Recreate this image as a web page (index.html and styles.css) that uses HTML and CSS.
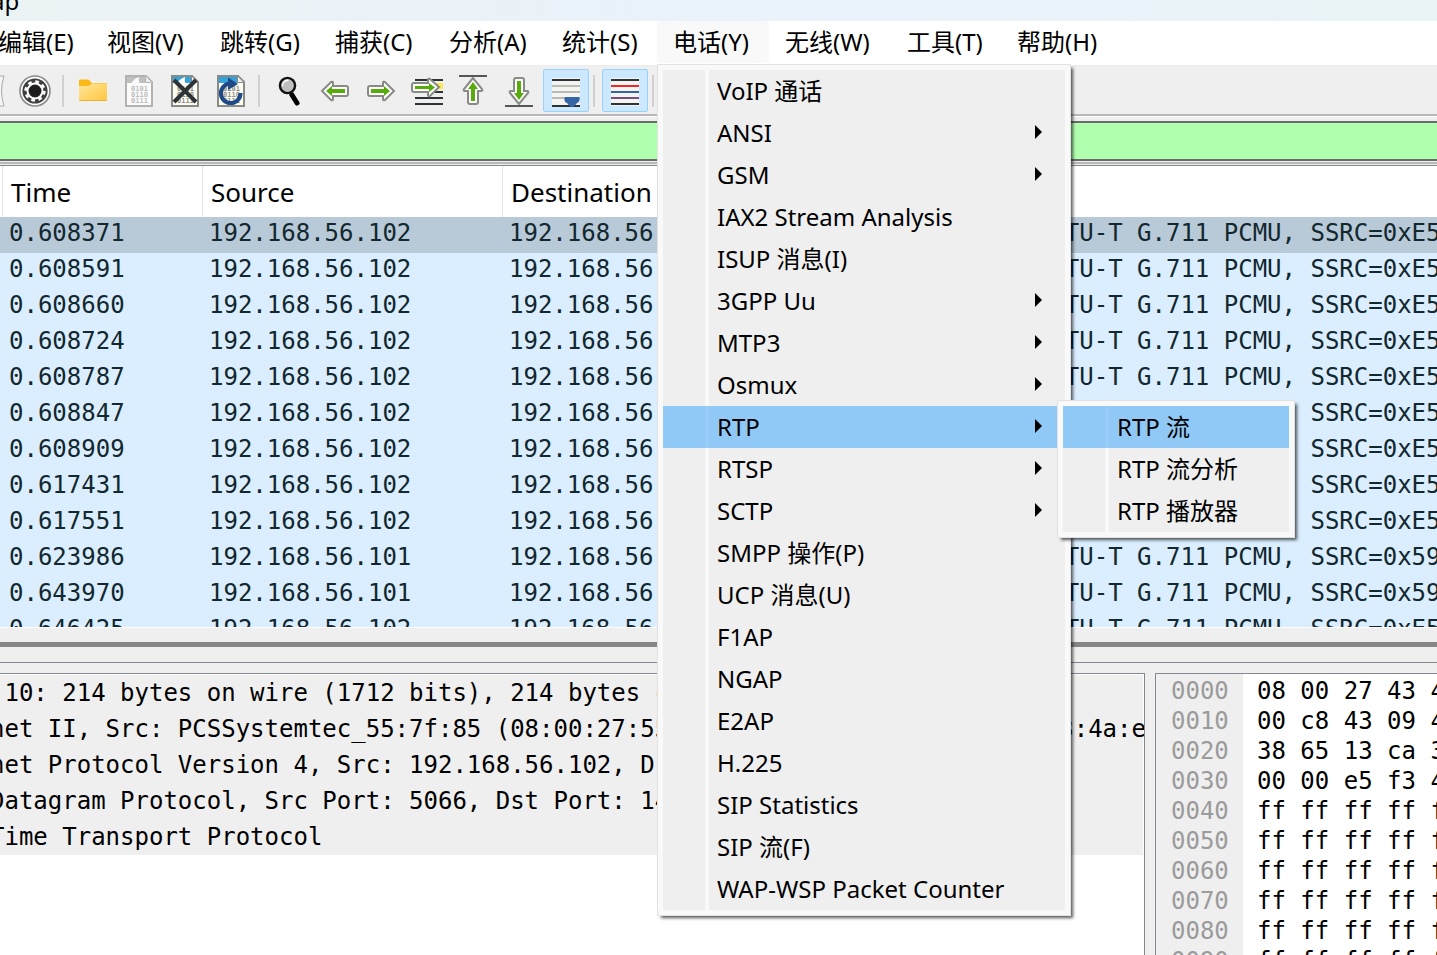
FILE: index.html
```html
<!DOCTYPE html>
<html lang="zh-CN">
<head>
    <meta charset="UTF-8">
    <meta name="viewport" content="width=device-width, initial-scale=1.0">
    <title>Packet Capture</title>
    <link rel="stylesheet" href="styles.css">
</head>
<body>
    <header class="title-bar">ap</header>

    <nav class="menu-bar">
        <button class="menu-title">编辑(E)</button>
        <button class="menu-title">视图(V)</button>
        <button class="menu-title">跳转(G)</button>
        <button class="menu-title">捕获(C)</button>
        <button class="menu-title">分析(A)</button>
        <button class="menu-title">统计(S)</button>
        <div class="menu-holder">
            <button class="menu-title open">电话(Y)</button>
            <!-- Telephony menu -->
            <div class="menu main-menu">
                <button class="menu-item">VoIP 通话</button>
                <button class="menu-item has-sub">ANSI</button>
                <button class="menu-item has-sub">GSM</button>
                <button class="menu-item">IAX2 Stream Analysis</button>
                <button class="menu-item">ISUP 消息(I)</button>
                <button class="menu-item has-sub">3GPP Uu</button>
                <button class="menu-item has-sub">MTP3</button>
                <button class="menu-item has-sub">Osmux</button>
                <div class="menu-holder">
                    <button class="menu-item has-sub active">RTP</button>
                    <div class="menu sub-menu">
                        <button class="menu-item active">RTP 流</button>
                        <button class="menu-item">RTP 流分析</button>
                        <button class="menu-item">RTP 播放器</button>
                    </div>
                </div>
                <button class="menu-item has-sub">RTSP</button>
                <button class="menu-item has-sub">SCTP</button>
                <button class="menu-item">SMPP 操作(P)</button>
                <button class="menu-item">UCP 消息(U)</button>
                <button class="menu-item">F1AP</button>
                <button class="menu-item">NGAP</button>
                <button class="menu-item">E2AP</button>
                <button class="menu-item">H.225</button>
                <button class="menu-item">SIP Statistics</button>
                <button class="menu-item">SIP 流(F)</button>
                <button class="menu-item">WAP-WSP Packet Counter</button>
            </div>
        </div>
        <button class="menu-title">无线(W)</button>
        <button class="menu-title">工具(T)</button>
        <button class="menu-title">帮助(H)</button>
    </nav>

    <div class="toolbar">
        <button class="tool" aria-label="Restart capture">
            <svg width="32" height="32" viewBox="0 0 32 32"><path d="M2 1h29q-5 15 0 30H2z" fill="#f6f6f6" stroke="#aaa"/></svg>
        </button>
        <button class="tool" aria-label="Capture options">
            <svg width="32" height="32" viewBox="0 0 32 32">
                <circle cx="16" cy="16" r="15" fill="#fff" stroke="#8a8a8a" stroke-width="1.6"/>
                <circle cx="16" cy="16" r="12.6" fill="#3f4042"/>
                <circle cx="16" cy="16" r="7.5" fill="#222" stroke="#fff" stroke-width="2"/>
                <circle cx="16" cy="16" r="9.4" fill="none" stroke="#fff" stroke-width="2.6" stroke-dasharray="3.7 3.68"/>
                <circle cx="16" cy="16" r="5" fill="#1c1c1c"/>
            </svg>
        </button>
        <span class="separator"></span>
        <button class="tool" aria-label="Open">
            <svg width="28" height="32" viewBox="0 0 28 32">
                <defs><linearGradient id="folder" x1="0" y1="0" x2="1" y2="1"><stop offset="0" stop-color="#ffe69a"/><stop offset="1" stop-color="#ffc63f"/></linearGradient></defs>
                <path d="M0 5.500q0-1 1-1h8.500l3.500 3.500h14q1 0 1 1v6H0z" fill="#fbb917"/>
                <path d="M0 11h9.500l3.500-2.500h14q1 0 1 1V25q0 1-1 1H1q-1 0-1-1z" fill="url(#folder)"/>
                <path d="M.5 25.500h27" stroke="#edaf31"/>
            </svg>
        </button>
        <button class="tool" aria-label="Save">
            <svg width="28" height="32" viewBox="0 0 28 32">
                <path d="M1 1h20l6 6v24H1z" fill="#fbfbfb" stroke="#b2b2b2" stroke-width="2"/>
                <path d="M2 2h18v6H2z" fill="#c0c0c0"/>
                <path d="M6 9q2-5 8-7q-1 4 1 7zM20 1v7h7z" fill="#fafafa"/>
                <path d="M20.500 1.500v6h6" fill="#eee" stroke="#b2b2b2"/>
                <g class="bits pale"><text x="6" y="16">0101</text><text x="6" y="22">0110</text><text x="6" y="28">0111</text></g>
            </svg>
        </button>
        <button class="tool" aria-label="Close file">
            <svg width="28" height="32" viewBox="0 0 28 32">
                <path d="M1 1h20l6 6v24H1z" fill="#fdfdf0" stroke="#888a85" stroke-width="2"/>
                <path d="M2 2h18v6H2z" fill="#33a3dc"/>
                <path d="M6 9q2-5 8-7q-1 4 1 7z" fill="#fff"/>
                <path d="M20.500 1.500v6h6" fill="#eee" stroke="#888a85"/>
                <g class="bits"><text x="6" y="16">0101</text><text x="6" y="22">0110</text><text x="6" y="28">0111</text></g>
                <path d="M3 5l22 22M25 5L3 27" stroke="#2e3436" stroke-width="4"/>
            </svg>
        </button>
        <button class="tool" aria-label="Reload file">
            <svg width="28" height="32" viewBox="0 0 28 32">
                <path d="M1 1h20l6 6v24H1z" fill="#fdfdf0" stroke="#888a85" stroke-width="2"/>
                <path d="M2 2h18v6H2z" fill="#33a3dc"/>
                <path d="M20.500 1.500v6h6" fill="#eee" stroke="#888a85"/>
                <g class="bits"><text x="6" y="16">0101</text><text x="6" y="22">0110</text><text x="6" y="28">0111</text></g>
                <path d="M23.500 18A9.800 9.800 0 1 1 14 8.500" fill="none" stroke="#204a87" stroke-width="4"/>
                <path d="M11 2.500L21 9l-10 6z" fill="#204a87"/>
            </svg>
        </button>
        <span class="separator"></span>
        <button class="tool" aria-label="Find packet">
            <svg width="28" height="32" viewBox="0 0 28 32">
                <path d="M17 20l5 8" stroke="#000" stroke-width="5" stroke-linecap="round"/>
                <path d="M13 15l4 5" stroke="#000" stroke-width="3"/>
                <circle cx="12.500" cy="10.500" r="7.600" fill="#bfbfbf" stroke="#111" stroke-width="2.400"/>
                <path d="M7.500 11a5 5 0 0 1 6-5.500" fill="none" stroke="#fff" stroke-width="1.500"/>
            </svg>
        </button>
        <button class="tool" aria-label="Previous packet">
            <svg class="arrow" width="30" height="32" viewBox="0 0 30 32"><path class="rim" d="M2 16l9-9q2-1 2 1v3h13q2 0 2 2v6q0 2-2 2H13v3q0 2-2 1z"/><path class="fill" d="M6 16l6-5v3h13v4H12v3z"/></svg>
        </button>
        <button class="tool" aria-label="Next packet">
            <svg class="arrow" width="30" height="32" viewBox="0 0 30 32"><path class="rim" d="M28 16l-9-9q-2-1-2 1v3H4q-2 0-2 2v6q0 2 2 2h13v3q0 2 2 1z"/><path class="fill" d="M24 16l-6-5v3H5v4h13v3z"/></svg>
        </button>
        <button class="tool" aria-label="Go to packet">
            <svg class="arrow" width="32" height="32" viewBox="0 0 32 32">
                <path d="M18 8h14v6H18z" fill="#fce94f"/>
                <path d="M4 5h28M4 17h28M4 23h28M4 29h28" stroke="#2e3436" stroke-width="2"/>
                <path class="rim" d="M28 12l-9-8q-2-1-2 1v3H3q-2 0-2 2v5q0 2 2 2h14v3q0 2 2 1z"/><path class="fill" d="M24 12.500L18 8v3H4v3h14v3z"/>
            </svg>
        </button>
        <button class="tool" aria-label="First packet">
            <svg class="arrow" width="28" height="32" viewBox="0 0 28 32"><path d="M0 1h28" stroke="#555753" stroke-width="2"/><path class="rim" d="M14 3l-9 11q-1 2 1 2h3v11q0 2 2 2h6q2 0 2-2V16h3q2 0 1-2z"/><path class="fill" d="M14 7l-5 7h3v12h4V14h3z"/></svg>
        </button>
        <button class="tool" aria-label="Last packet">
            <svg class="arrow" width="28" height="32" viewBox="0 0 28 32"><path d="M0 31h28" stroke="#555753" stroke-width="2"/><path class="rim" d="M14 29L5 18q-1-2 1-2h3V5q0-2 2-2h6q2 0 2 2v11h3q2 0 1 2z"/><path class="fill" d="M14 25l-5-7h3V6h4v12h3z"/></svg>
        </button>
        <button class="tool checked" aria-label="Auto scroll">
            <svg width="28" height="32" viewBox="0 0 28 32">
                <path d="M0 3h28v28H0z" fill="#f4f4f2"/>
                <path d="M0 5h28M0 31h28" stroke="#2e3436" stroke-width="2"/>
                <path d="M0 11h28M0 17h28M0 23h28" stroke="#babdb6" stroke-width="2"/>
                <path d="M13 22h14q2 4-2 6q-3 4-5 4t-5-4q-4-2-2-6z" fill="#3465a4"/>
            </svg>
        </button>
        <span class="separator"></span>
        <button class="tool checked" aria-label="Colorize">
            <svg width="28" height="32" viewBox="0 0 28 32">
                <path d="M0 3h28v28H0z" fill="#f4f4f2"/>
                <path d="M0 5h28M0 29h28" stroke="#2e3436" stroke-width="2"/>
                <path d="M0 11h28" stroke="#ef2929" stroke-width="2"/>
                <path d="M0 17h28" stroke="#3465a4" stroke-width="2"/>
                <path d="M0 23h28" stroke="#75507b" stroke-width="2"/>
            </svg>
        </button>
        <span class="separator"></span>
    </div>

    <div class="filter-bar">
        <input class="filter-input" type="text" aria-label="Display filter">
    </div>

    <section class="packet-list">
        <table class="packets">
            <colgroup>
                <col class="col-no"><col class="col-time"><col class="col-address"><col class="col-address"><col class="col-small"><col class="col-small"><col>
            </colgroup>
            <thead>
                <tr><th></th><th>Time</th><th>Source</th><th>Destination</th><th></th><th></th><th></th></tr>
            </thead>
            <tbody>
                <tr class="selected"><td></td><td>0.608371</td><td>192.168.56.102</td><td>192.168.56.101</td><td></td><td></td><td>PT=ITU-T G.711 PCMU, SSRC=0xE5</td></tr>
                <tr><td></td><td>0.608591</td><td>192.168.56.102</td><td>192.168.56.101</td><td></td><td></td><td>PT=ITU-T G.711 PCMU, SSRC=0xE5</td></tr>
                <tr><td></td><td>0.608660</td><td>192.168.56.102</td><td>192.168.56.101</td><td></td><td></td><td>PT=ITU-T G.711 PCMU, SSRC=0xE5</td></tr>
                <tr><td></td><td>0.608724</td><td>192.168.56.102</td><td>192.168.56.101</td><td></td><td></td><td>PT=ITU-T G.711 PCMU, SSRC=0xE5</td></tr>
                <tr><td></td><td>0.608787</td><td>192.168.56.102</td><td>192.168.56.101</td><td></td><td></td><td>PT=ITU-T G.711 PCMU, SSRC=0xE5</td></tr>
                <tr><td></td><td>0.608847</td><td>192.168.56.102</td><td>192.168.56.101</td><td></td><td></td><td>PT=ITU-T G.711 PCMU, SSRC=0xE5</td></tr>
                <tr><td></td><td>0.608909</td><td>192.168.56.102</td><td>192.168.56.101</td><td></td><td></td><td>PT=ITU-T G.711 PCMU, SSRC=0xE5</td></tr>
                <tr><td></td><td>0.617431</td><td>192.168.56.102</td><td>192.168.56.101</td><td></td><td></td><td>PT=ITU-T G.711 PCMU, SSRC=0xE5</td></tr>
                <tr><td></td><td>0.617551</td><td>192.168.56.102</td><td>192.168.56.101</td><td></td><td></td><td>PT=ITU-T G.711 PCMU, SSRC=0xE5</td></tr>
                <tr><td></td><td>0.623986</td><td>192.168.56.101</td><td>192.168.56.102</td><td></td><td></td><td>PT=ITU-T G.711 PCMU, SSRC=0x59</td></tr>
                <tr><td></td><td>0.643970</td><td>192.168.56.101</td><td>192.168.56.102</td><td></td><td></td><td>PT=ITU-T G.711 PCMU, SSRC=0x59</td></tr>
                <tr><td></td><td>0.646425</td><td>192.168.56.102</td><td>192.168.56.101</td><td></td><td></td><td>PT=ITU-T G.711 PCMU, SSRC=0xE5</td></tr>
            </tbody>
        </table>
    </section>

    <div class="splitter"></div>

    <main class="panes">
        <section class="details">
            <div class="detail-row"><span> 10: 214 bytes on wire (1712 bits), 214 bytes ca</span></div>
            <div class="detail-row"><span>net II, Src: PCSSystemtec_55:7f:85 (08:00:27:55:7f:85),</span><span>Dst: PCSSystemtec_43:4a:e</span></div>
            <div class="detail-row"><span>net Protocol Version 4, Src: 192.168.56.102, Dst: 192.168.56.101</span></div>
            <div class="detail-row"><span>Datagram Protocol, Src Port: 5066, Dst Port: 14</span></div>
            <div class="detail-row"><span>Time Transport Protocol</span></div>
        </section>
        <section class="bytes">
            <div class="offsets">0000
0010
0020
0030
0040
0050
0060
0070
0080
0090</div>
            <div class="hex">08 00 27 43 4a
00 c8 43 09 40
38 65 13 ca 3a
00 00 e5 f3 4d
ff ff ff ff ff
ff ff ff ff ff
ff ff ff ff ff
ff ff ff ff ff
ff ff ff ff ff
ff ff ff ff ff</div>
        </section>
    </main>
</body>
</html>
```
FILE: styles.css
```css
* {
    box-sizing: border-box;
}

body {
    margin: 0;
    height: 100vh;
    overflow: hidden;
    display: flex;
    flex-direction: column;
    background-color: #efefef;
    color: #000;
    font-family: "Noto Sans", "Noto Sans CJK SC", sans-serif;
    font-size: 24px;
}

button {
    border: none;
    padding: 0;
    background: none;
    color: inherit;
    font: inherit;
}

.title-bar {
    flex: none;
    height: 21px;
    overflow: hidden;
    line-height: 1px;
    text-indent: -9px;
    background: linear-gradient(to right, #ebf3f5, #eaf2fb 60%, #e9f4f6);
}

/* Menu bar */
.menu-bar {
    flex: none;
    display: grid;
    grid-template-columns: 109px 113px 115px 114px 113px 111px 112px 122px 110px 114px;
    height: 45px;
    margin-left: -18px;
    background-color: #fff;
    border-bottom: 1px solid #ececec;
}

.menu-holder {
    position: relative;
}

.menu-title {
    width: 100%;
    height: 42px;
    padding-left: 16px;
    line-height: 42px;
    text-align: left;
    white-space: nowrap;
}

.menu-title.open {
    background-color: #f9f9f9;
    border-radius: 4px;
}

.menu {
    position: absolute;
    z-index: 2;
    padding: 5px;
    border: 1px solid #e2e2e2;
    background: linear-gradient(to right, #efefef 42px, #f9f9f9 42px, #f9f9f9 46px, #efefef 46px) content-box, #f9f9f9;
    box-shadow: 3px 3px 3px -1px rgba(0, 0, 0, 0.65);
}

.main-menu {
    top: 43px;
    left: 0;
    width: 414px;
}

.sub-menu {
    top: -6px;
    left: 394px;
    width: 238px;
}

.menu-item {
    position: relative;
    display: block;
    width: 100%;
    height: 42px;
    padding-left: 54px;
    line-height: 42px;
    text-align: left;
    white-space: nowrap;
}

.menu-item.active {
    background: linear-gradient(to right, #90c8f6 42px, #97ccf7 42px, #97ccf7 46px, #90c8f6 46px);
}

.has-sub::after {
    content: "";
    position: absolute;
    top: 13px;
    right: 23px;
    border: 7px solid transparent;
    border-left-color: #000;
    border-right-width: 0;
}

/* Toolbar */
.toolbar {
    flex: none;
    display: flex;
    align-items: center;
    height: 50px;
    padding-top: 1px;
    margin-left: -34px;
    border-bottom: 2px solid #b8b8b8;
}

.tool {
    flex: none;
    display: flex;
    align-items: center;
    justify-content: center;
    width: 46px;
    height: 43px;
}

.tool.checked {
    margin-left: 1px;
    background-color: #cce8ff;
    border: 1px solid #99d1ff;
    border-radius: 2px;
}

.separator {
    flex: none;
    width: 2px;
    height: 32px;
    margin: 0 6px 0 4px;
    background-color: #d0d0d0;
}

.bits {
    font: bold 7px "DejaVu Sans Mono", monospace;
    fill: #8f918c;
}

.bits.pale {
    fill: #bdbdbd;
}

.arrow .rim {
    fill: #fff;
    stroke: #888a85;
    stroke-width: 2;
}

.arrow .fill {
    fill: #57ab0c;
}

/* Display filter */
.filter-bar {
    flex: none;
    padding: 4px 0 1px;
    border-top: 1px solid #fff;
    border-bottom: 2px solid #b8b8b8;
}

.filter-input {
    display: block;
    width: 100%;
    height: 40px;
    border: solid #6b6b6b;
    border-width: 2px 0;
    background-color: #afffaf;
    font: inherit;
}

/* Packet list */
.packet-list {
    flex: 0 0 463px;
    margin-top: 1px;
    overflow: hidden;
    border-top: 1px solid #828790;
    border-bottom: 1px solid #fff;
}

.packets {
    width: 100%;
    table-layout: fixed;
    border-collapse: collapse;
}

.col-no {
    width: 3px;
}

.col-time {
    width: 200px;
}

.col-address {
    width: 300px;
}

.col-small {
    width: 100px;
}

.packets th {
    height: 51px;
    padding: 0 8px;
    background-color: #fff;
    box-shadow: inset -1px 0 #e5e5e5;
    font-size: 26px;
    font-weight: normal;
    line-height: 36px;
    text-align: left;
}

.packets th:last-child {
    box-shadow: none;
}

.packets th:first-child,
.packets td:first-child {
    padding: 0;
}

.packets td {
    height: 36px;
    padding: 0 0 4px 6px;
    background-color: #daeeff;
    color: #12272e;
    font-family: "DejaVu Sans Mono", monospace;
    line-height: 32px;
    white-space: nowrap;
    overflow: hidden;
}

.packets td:last-child {
    padding-left: 4px;
}

.packets .selected td {
    background-color: #b8c9d8;
}

.splitter {
    flex: none;
    height: 35px;
    background: linear-gradient(#868686, #868686) 0 14px / 100% 5px no-repeat;
    border-bottom: 1px solid #828790;
}

/* Lower panes */
.panes {
    flex: 1;
    min-height: 0;
    display: grid;
    grid-template-columns: 1fr 282px;
    gap: 10px;
    margin-top: 10px;
    font-family: "DejaVu Sans Mono", monospace;
}

.details {
    min-width: 0;
    overflow: hidden;
    padding: 1px 1px 0 0;
    border: solid #828790;
    border-width: 1px 1px 0 0;
    background-color: #fff;
}

.detail-row {
    display: flex;
    justify-content: space-between;
    height: 36px;
    margin-left: -10px;
    background-color: #efefef;
    line-height: 36px;
    white-space: pre;
}

.bytes {
    display: flex;
    overflow: hidden;
    border: solid #828790;
    border-width: 1px 0 0 1px;
    background-color: #fff;
    line-height: 30px;
}

.offsets,
.hex {
    white-space: pre;
}

.offsets {
    flex: none;
    width: 87px;
    padding: 2px 0 0 15px;
    background-color: #efefef;
    color: #9b9b9b;
}

.hex {
    padding: 2px 0 0 14px;
}
```
